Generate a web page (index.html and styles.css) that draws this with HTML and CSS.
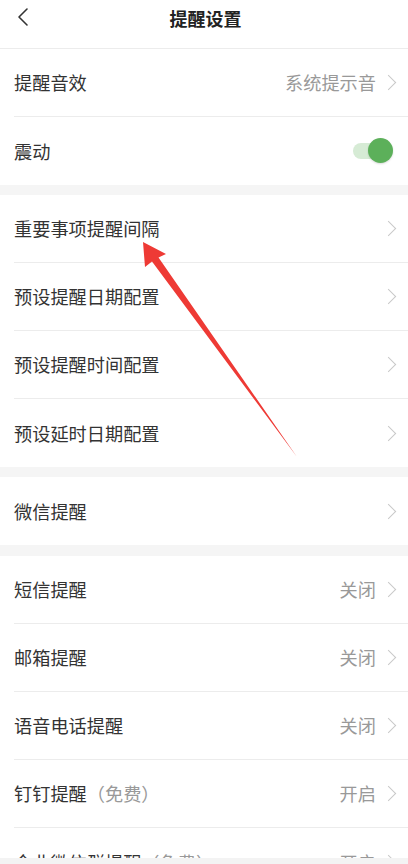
FILE: index.html
```html
<!DOCTYPE html>
<html lang="zh-CN">
<head>
<meta charset="utf-8">
<title>提醒设置</title>
<link rel="stylesheet" href="styles.css">
</head>
<body>
<div class="page">
  <header class="topbar">
    <div class="bar">
      <svg class="back" width="12" height="20" viewBox="0 0 12 20"><path d="M10 2 L2 10 L10 18" fill="none" stroke="#333" stroke-width="1.6" stroke-linecap="round" stroke-linejoin="round"/></svg>
      <h1 class="title">提醒设置</h1>
    </div>
  </header>
  <main class="content">
    <section class="group">
      <div class="row"><span class="label">提醒音效</span><span class="value">系统提示音</span><span class="chev"></span></div>
      <div class="row"><span class="label">震动</span><span class="toggle"><span class="track"></span><span class="knob"></span></span></div>
    </section>
    <section class="group">
      <div class="row"><span class="label">重要事项提醒间隔</span><span class="chev"></span></div>
      <div class="row"><span class="label">预设提醒日期配置</span><span class="chev"></span></div>
      <div class="row"><span class="label">预设提醒时间配置</span><span class="chev"></span></div>
      <div class="row"><span class="label">预设延时日期配置</span><span class="chev"></span></div>
    </section>
    <section class="group">
      <div class="row"><span class="label">微信提醒</span><span class="chev"></span></div>
    </section>
    <section class="group group-last">
      <div class="row"><span class="label">短信提醒</span><span class="value">关闭</span><span class="chev"></span></div>
      <div class="row"><span class="label">邮箱提醒</span><span class="value">关闭</span><span class="chev"></span></div>
      <div class="row"><span class="label">语音电话提醒</span><span class="value">关闭</span><span class="chev"></span></div>
      <div class="row"><span class="label">钉钉提醒<span class="note">（免费）</span></span><span class="value">开启</span><span class="chev"></span></div>
      <div class="row"><span class="label">企业微信群提醒<span class="note">（免费）</span></span><span class="value">开启</span><span class="chev"></span></div>
    </section>
  </main>
  <div class="footer"></div>
  <svg class="arrow" width="408" height="864" viewBox="0 0 408 864">
    <polygon points="143,242 166,254 158.5,257.5 297,457 152,261.5 145,267" fill="#ee3a35"/>
  </svg>
</div>
</body>
</html>
```

FILE: styles.css
```css
* { box-sizing: border-box; }
html, body { margin: 0; padding: 0; }
body {
  font-family: "Noto Sans CJK SC", "Noto Sans", sans-serif;
  background: #f5f5f5;
  color: #333;
}
.page {
  position: relative;
  width: 408px;
  height: 864px;
  overflow: hidden;
  display: flex;
  flex-direction: column;
}
.topbar {
  flex: none;
  height: 49px;
  background: #fff;
  border-bottom: 1px solid #ececec;
}
.bar {
  position: relative;
  height: 35px;
  display: flex;
  align-items: center;
  justify-content: center;
}
.back {
  position: absolute;
  left: 17px;
  top: 7px;
}
.title {
  margin: 0;
  font-size: 18px;
  font-weight: 700;
  color: #222;
  line-height: 1;
  padding-left: 3px;
}
.content {
  flex: 1;
  overflow: hidden;
  display: flex;
  flex-direction: column;
  gap: 10px;
}
.group {
  background: #fff;
  flex: none;
}
.group-last { margin-top: 1px; }
.row {
  height: 68px;
  margin-left: 14px;
  padding-right: 12px;
  display: flex;
  align-items: center;
  border-bottom: 1px solid #ececec;
}
.row:last-child { border-bottom: none; }
.label {
  flex: 1;
  font-size: 18.2px;
  color: #333;
  line-height: 1;
}
.note { color: #999; }
.value {
  font-size: 18.2px;
  color: #999;
  line-height: 1;
  margin-right: 7px;
}
.chev {
  width: 11px;
  height: 11px;
  border-top: 1.5px solid #c8c8c8;
  border-right: 1.5px solid #c8c8c8;
  transform: rotate(45deg);
  margin-right: 2px;
}
.toggle {
  position: relative;
  width: 40px;
  height: 26px;
  margin-right: 3px;
}
.track {
  position: absolute;
  left: 0;
  top: 5px;
  width: 34px;
  height: 16px;
  border-radius: 8px;
  background: #d6ebd5;
}
.knob {
  position: absolute;
  right: 0;
  top: 0;
  width: 25px;
  height: 25px;
  border-radius: 50%;
  background: #5cb05a;
  box-shadow: 0 1px 2px rgba(0,0,0,0.15);
}
.footer {
  flex: none;
  height: 6px;
  background: #f3f3f3;
}
.arrow {
  position: absolute;
  left: 0;
  top: 0;
  pointer-events: none;
}
```
